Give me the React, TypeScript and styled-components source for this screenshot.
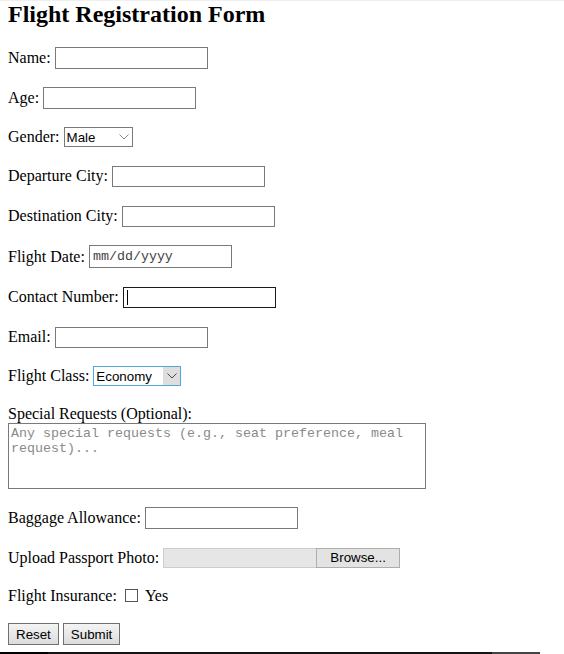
import React from 'react';
import styled, { createGlobalStyle } from 'styled-components';

const GlobalStyle = createGlobalStyle`
  html, body {
    margin: 0;
    padding: 0;
    background: #ffffff;
  }
  body {
    border-top: 1px solid #efefef;
    font-family: "Liberation Serif", "Times New Roman", serif;
    font-size: 16px;
    color: #000;
  }
`;

const Chevron = ({ color }: { color: string }) => (
  <svg width="10" height="6" viewBox="0 0 10 6">
    <polyline points="0.5,0.5 5,5 9.5,0.5" fill="none" stroke={color} strokeWidth="1" />
  </svg>
);

const App = () => {
  return (
    <>
      <GlobalStyle />
      <Page>
        <Title>Flight Registration Form</Title>
        <Form onSubmit={(e) => e.preventDefault()}>
          <Row $h={22}>
            Name:
            <TextInput type="text" />
          </Row>
          <Row $h={22}>
            Age:
            <TextInput type="text" />
          </Row>
          <Row $h={20}>
            Gender:
            <SelectWrap>
              <Select $w={69} defaultValue="Male">
                <option>Male</option>
                <option>Female</option>
                <option>Other</option>
              </Select>
              <Arrow>
                <Chevron color="#8a8a8a" />
              </Arrow>
            </SelectWrap>
          </Row>
          <Row $h={22}>
            Departure City:
            <TextInput type="text" $h={21} />
          </Row>
          <Row $h={22}>
            Destination City:
            <TextInput type="text" $h={21} />
          </Row>
          <Row $h={23}>
            Flight Date:
            <DateInput type="text" placeholder="mm/dd/yyyy" />
          </Row>
          <Row $h={22}>
            Contact Number:
            <CaretWrap>
              <TextInput type="text" $h={21} $focused />
            </CaretWrap>
          </Row>
          <Row $h={22}>
            Email:
            <TextInput type="text" $h={21} />
          </Row>
          <Row $h={20}>
            Flight Class:
            <SelectWrap>
              <Select $w={88} $focused defaultValue="Economy">
                <option>Economy</option>
                <option>Business</option>
                <option>First</option>
              </Select>
              <ArrowBox>
                <Chevron color="#4a4a4a" />
              </ArrowBox>
            </SelectWrap>
          </Row>
          <Block>
            <BlockLabel>Special Requests (Optional):</BlockLabel>
            <TextArea placeholder="Any special requests (e.g., seat preference, meal request)..." />
          </Block>
          <Row $h={22}>
            Baggage Allowance:
            <TextInput type="text" />
          </Row>
          <Row $h={21}>
            Upload Passport Photo:
            <FileBox>
              <HiddenFile type="file" accept="image/*" />
              <FileField />
              <FileButton>Browse...</FileButton>
            </FileBox>
          </Row>
          <Row $h={19}>
            Flight Insurance:
            <CheckLabel>
              <CheckBox type="checkbox" />
              Yes
            </CheckLabel>
          </Row>
          <Buttons>
            <Button type="reset">Reset</Button>
            <Button type="submit">Submit</Button>
          </Buttons>
        </Form>
      </Page>
      <ScrollEdge />
    </>
  );
};

const Page = styled.div`
  padding: 0 8px;
`;

const Title = styled.h1`
  margin: 0;
  font-size: 24px;
  font-weight: bold;
  line-height: 27px;
  height: 28px;
`;

const Form = styled.form`
  display: flex;
  flex-direction: column;
  gap: 18px;
  margin-top: 18px;
`;

const Row = styled.div<{ $h: number }>`
  display: flex;
  align-items: center;
  gap: 4px;
  height: ${(p) => p.$h}px;
  white-space: nowrap;
`;

const TextInput = styled.input<{ $h?: number; $focused?: boolean }>`
  box-sizing: border-box;
  width: 153px;
  height: ${(p) => p.$h ?? 22}px;
  margin: 0;
  padding: 1px 3px;
  border: 1px solid ${(p) => (p.$focused ? '#1a1a1a' : '#7a7a7a')};
  border-radius: 0;
  font-family: "Liberation Sans", Arial, sans-serif;
  font-size: 13.33px;
  background: #fff;
  outline: none;
`;

const DateInput = styled(TextInput)`
  width: 143px;
  height: 23px;
  font-family: "Liberation Mono", "Courier New", monospace;
  font-size: 13.33px;

  &::placeholder {
    color: #444;
  }
`;

const CaretWrap = styled.span`
  position: relative;
  display: inline-flex;

  &::after {
    content: '';
    position: absolute;
    left: 4px;
    top: 3px;
    bottom: 3px;
    width: 1px;
    background: #000;
  }
`;

const SelectWrap = styled.span`
  position: relative;
  display: inline-flex;
`;

const Select = styled.select<{ $w: number; $focused?: boolean }>`
  appearance: none;
  box-sizing: border-box;
  width: ${(p) => p.$w}px;
  height: 20px;
  margin: 0;
  padding: 0 2px;
  border: 1px solid ${(p) => (p.$focused ? '#4ea6e2' : '#7a7a7a')};
  border-radius: 0;
  background: #fff;
  color: #000;
  font-family: "Liberation Sans", Arial, sans-serif;
  font-size: 13.33px;
  outline: none;
`;

const Arrow = styled.span`
  position: absolute;
  right: 4px;
  top: 7px;
  display: flex;
  pointer-events: none;
`;

const ArrowBox = styled.span`
  position: absolute;
  right: 1px;
  top: 1px;
  bottom: 1px;
  width: 17px;
  display: flex;
  align-items: center;
  justify-content: center;
  background: #dedede;
  pointer-events: none;
`;

const Block = styled.div`
  display: flex;
  flex-direction: column;
  gap: 1px;
`;

const BlockLabel = styled.label`
  box-sizing: border-box;
  line-height: 16px;
  height: 18px;
  padding-top: 2px;
`;

const TextArea = styled.textarea`
  box-sizing: border-box;
  width: 418px;
  height: 66px;
  margin: 0;
  padding: 2px 2px;
  border: 1px solid #7a7a7a;
  border-radius: 0;
  resize: none;
  overflow: hidden;
  font-family: "Liberation Mono", "Courier New", monospace;
  font-size: 13.33px;
  line-height: 15.3px;
  outline: none;

  &::placeholder {
    color: #8a8a8a;
  }
`;

const FileBox = styled.label`
  display: inline-flex;
  height: 20px;
  cursor: pointer;
`;

const HiddenFile = styled.input`
  display: none;
`;

const FileField = styled.span`
  box-sizing: border-box;
  width: 153px;
  height: 20px;
  background: #e6e6e6;
  border: 1px solid #cdcdcd;
  border-right: none;
`;

const FileButton = styled.span`
  box-sizing: border-box;
  width: 84px;
  height: 20px;
  display: flex;
  align-items: center;
  justify-content: center;
  background: #e3e3e3;
  border: 1px solid #adadad;
  font-family: "Liberation Sans", Arial, sans-serif;
  font-size: 13.33px;
  color: #000;
`;

const CheckLabel = styled.label`
  display: inline-flex;
  align-items: center;
  gap: 4px;
`;

const CheckBox = styled.input`
  appearance: none;
  box-sizing: border-box;
  width: 13px;
  height: 13px;
  margin: 0 3px 0 4px;
  border: 1px solid #555;
  background: #fff;
  border-radius: 0;

  &:checked {
    background: #333;
  }
`;

const Buttons = styled.div`
  display: flex;
  gap: 4px;
  height: 22px;
`;

const Button = styled.button`
  box-sizing: border-box;
  height: 22px;
  margin: 0;
  padding: 0 7px;
  border: 1px solid #707070;
  border-radius: 0;
  background: linear-gradient(to bottom, #f4f4f4, #dcdcdc);
  font-family: "Liberation Sans", Arial, sans-serif;
  font-size: 13.33px;
  color: #000;
  cursor: pointer;
`;

const ScrollEdge = styled.div`
  position: fixed;
  left: 0;
  bottom: 0;
  width: 540px;
  height: 2px;
  background: linear-gradient(to right, #000 0, #000 48px, #151515 48px, #151515 492px, #444 492px, #444 540px);
`;

export default App;
